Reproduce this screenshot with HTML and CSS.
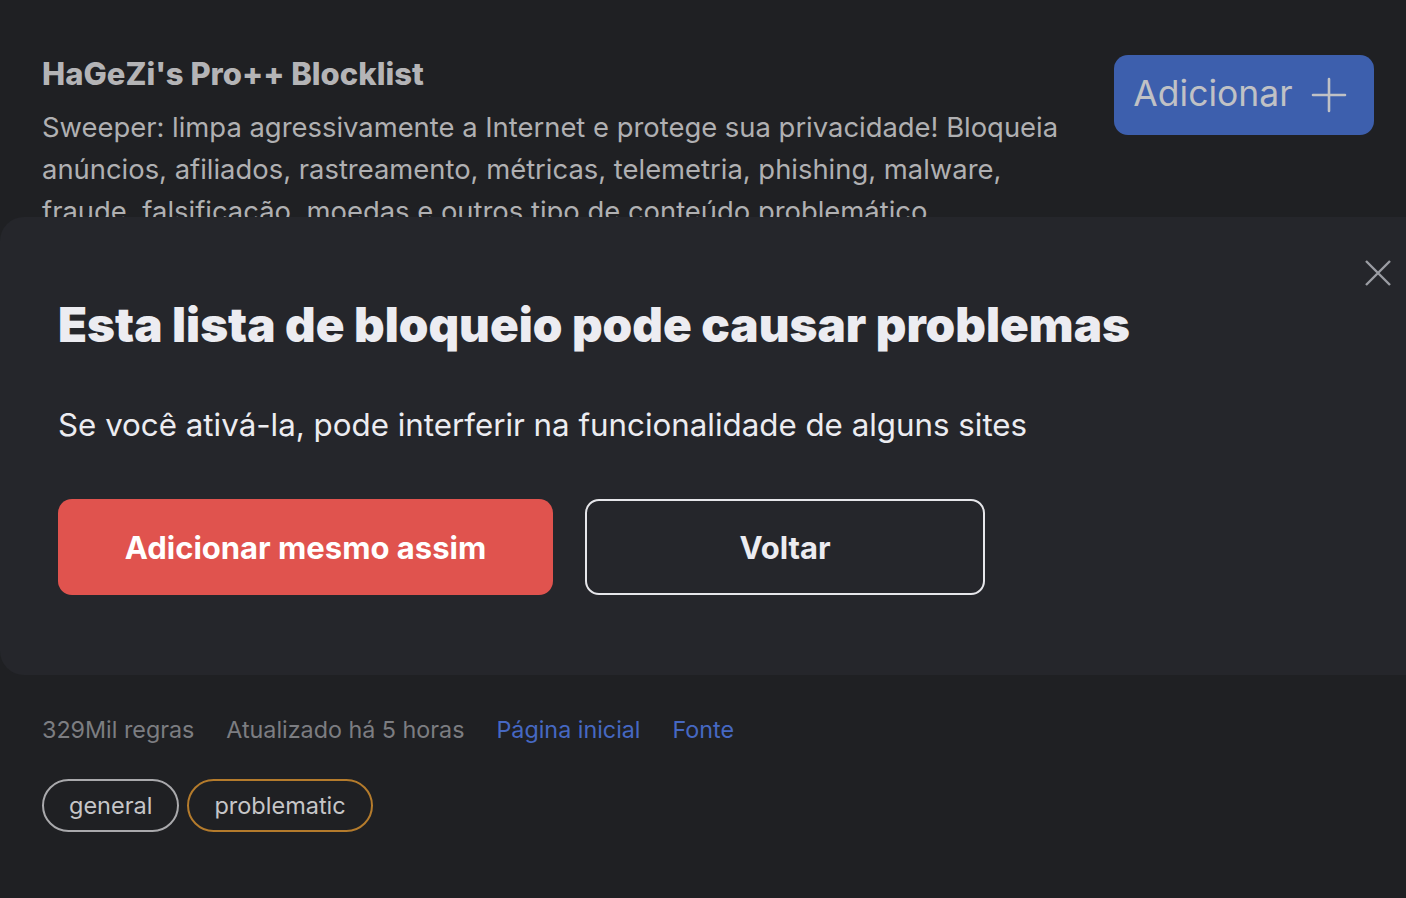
FILE: index.html
```html
<!DOCTYPE html>
<html lang="pt-BR">

<head>
  <meta charset="UTF-8">
  <meta name="viewport" content="width=device-width, initial-scale=1.0">
  <title>HaGeZi's Pro++ Blocklist</title>
  <link rel="stylesheet" href="styles.css">
</head>

<body>
  <div class="page">
    <!-- cabeçalho da lista -->
    <div class="list-head">
      <div class="list-info">
        <h1 class="list-title">HaGeZi's Pro++ Blocklist</h1>
        <p class="list-desc">Sweeper: limpa agressivamente a Internet e protege sua privacidade! Bloqueia anúncios, afiliados, rastreamento, métricas, telemetria, phishing, malware, fraude, falsificação, moedas e outros tipo de conteúdo problemático.</p>
      </div>
      <button class="add-btn">
        Adicionar
        <svg class="add-icon" viewBox="0 0 36 36" width="36" height="36">
          <path d="M18 2v32M2 18h32" stroke="currentColor" stroke-width="2.6" stroke-linecap="round" fill="none" />
        </svg>
      </button>
    </div>

    <div class="list-meta">
      <span>329Mil regras</span>
      <span>Atualizado há 5 horas</span>
      <a href="#">Página inicial</a>
      <a href="#">Fonte</a>
    </div>

    <div class="tags">
      <span class="tag">general</span>
      <span class="tag warn">problematic</span>
    </div>
  </div>

  <!-- aviso -->
  <div class="sheet">
    <button class="close-btn" aria-label="Fechar">
      <svg viewBox="0 0 28 28" width="28" height="28">
        <path d="M2 2l24 24M26 2L2 26" stroke="currentColor" stroke-width="2.4" fill="none" />
      </svg>
    </button>
    <h2 class="sheet-title">Esta lista de bloqueio pode causar problemas</h2>
    <p class="sheet-text">Se você ativá-la, pode interferir na funcionalidade de alguns sites</p>
    <div class="sheet-actions">
      <button class="btn btn-danger">Adicionar mesmo assim</button>
      <button class="btn btn-ghost">Voltar</button>
    </div>
  </div>
</body>

</html>
```

FILE: styles.css
```css
body {
  margin: 0;
  height: 898px;
  overflow: hidden;
  background: #1f2023;
  font-family: Inter, "Noto Sans", sans-serif;
  position: relative;
}

.page {
  padding: 54px 32px 0 42px;
}

.list-head {
  display: flex;
  justify-content: space-between;
  align-items: flex-start;
}

.list-info {
  width: 1030px;
}

.list-title {
  margin: 0;
  font-size: 31px;
  line-height: 40px;
  font-weight: 800;
  color: #b4b4b6;
}

.list-desc {
  margin: 12px 0 0;
  font-size: 27.4px;
  line-height: 42px;
  color: #b0b0b2;
}

.add-btn {
  margin-top: 1px;
  width: 260px;
  height: 80px;
  display: flex;
  align-items: center;
  justify-content: center;
  gap: 18px;
  background: #3d5fad;
  color: #c0c1c5;
  border: none;
  border-radius: 14px;
  font-family: inherit;
  font-size: 35.5px;
  padding: 0 8px 4px 0;
}

.add-icon {
  margin-top: 4px;
}

.list-meta {
  display: flex;
  gap: 32px;
  margin-top: 482px;
  font-size: 23.3px;
  line-height: 32px;
  color: #7c7d81;
}

.list-meta a {
  color: #4668c2;
  text-decoration: none;
}

.tags {
  display: flex;
  gap: 8px;
  margin-top: 33px;
}

.tag {
  height: 53px;
  box-sizing: border-box;
  display: flex;
  align-items: center;
  padding: 0 25px;
  border: 2px solid #a9a9ac;
  border-radius: 27px;
  font-size: 23.5px;
  color: #c6c6c8;
}

.tag.warn {
  border-color: #b47b2c;
}

/* folha de aviso */
.sheet {
  position: absolute;
  top: 217px;
  left: 0;
  width: 1460px;
  height: 458px;
  box-sizing: border-box;
  padding: 80px 0 0 58px;
  background: #25262b;
  border-radius: 24px 0 0 24px;
  font-family: Inter, "Noto Sans", sans-serif;
}

.close-btn {
  position: absolute;
  top: 42px;
  left: 1364px;
  padding: 0;
  background: none;
  border: none;
  color: #9b9da3;
  cursor: pointer;
}

.sheet-title {
  margin: 0;
  font-size: 47.5px;
  line-height: 56px;
  font-weight: 900;
  color: #ececf1;
}

.sheet-text {
  margin: 54px 0 0;
  font-size: 31.3px;
  line-height: 36px;
  color: #ececf1;
}

.sheet-actions {
  display: flex;
  gap: 32px;
  margin-top: 56px;
}

.btn {
  height: 96px;
  border-radius: 14px;
  font-family: inherit;
  font-size: 31px;
  font-weight: 700;
  cursor: pointer;
}

.btn-danger {
  width: 495px;
  background: #e0534e;
  color: #ffffff;
  border: none;
}

.btn-ghost {
  width: 400px;
  background: transparent;
  color: #ececf1;
  border: 2px solid #e6e6ea;
}
```
